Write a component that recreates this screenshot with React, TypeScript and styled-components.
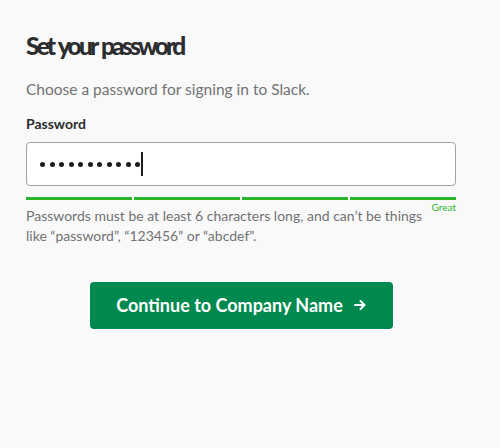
import React from "react";
import styled, { createGlobalStyle } from "styled-components";

const GlobalStyle = createGlobalStyle`
  html, body {
    margin: 0;
    padding: 0;
    background: #f9f9f9;
  }
  body {
    font-family: Lato, "Open Sans", sans-serif;
    -webkit-font-smoothing: antialiased;
  }
`;

const Page = styled.main`
  width: 500px;
  min-height: 448px;
  box-sizing: border-box;
  padding: 30px 44px 0 26px;
  background: #f9f9f9;
`;

const Form = styled.form`
  width: 430px;
  display: flex;
  flex-direction: column;
`;

const Title = styled.h1`
  margin: 0;
  font-size: 24.5px;
  line-height: 31px;
  font-weight: 900;
  color: #2c2d30;
  letter-spacing: -2.8px;
  word-spacing: 2px;
`;

const Lead = styled.p`
  margin: 18px 0 0;
  font-size: 15.5px;
  line-height: 20px;
  color: #717274;
`;

const Label = styled.label`
  margin-top: 16px;
  font-size: 14px;
  line-height: 18px;
  font-weight: 700;
  color: #2c2d30;
`;

const Field = styled.div`
  margin-top: 9px;
  height: 44px;
  box-sizing: border-box;
  border: 1px solid #a0a0a2;
  border-radius: 4px;
  background: #ffffff;
  display: flex;
  align-items: center;
  padding: 0 0 0 13px;
`;

const Dots = styled.span`
  display: flex;
  gap: 4.5px;
`;

const Dot = styled.span`
  width: 5px;
  height: 5px;
  border-radius: 50%;
  background: #1d1c1d;
`;

const Caret = styled.span`
  width: 1.5px;
  height: 24px;
  margin-left: 1px;
  background: #1d1c1d;
`;

const Meter = styled.div`
  margin-top: 11px;
  display: grid;
  grid-template-columns: repeat(4, 1fr);
  gap: 2px;
`;

const Segment = styled.span<{ $on: boolean }>`
  height: 3px;
  background: ${(p) => (p.$on ? "#2bb52a" : "#d8d8d8")};
`;

const Strength = styled.div`
  margin-top: 1px;
  display: flex;
  justify-content: flex-end;
  font-size: 10px;
  line-height: 12px;
  color: #2bb52a;
`;

const Hint = styled.p`
  margin: -7px 0 0;
  width: 412px;
  font-size: 14px;
  line-height: 20px;
  color: #717274;
`;

const Actions = styled.div`
  margin-top: 36px;
  display: flex;
  justify-content: center;
`;

const Button = styled.button`
  width: 303px;
  height: 47px;
  border: none;
  border-radius: 4px;
  background: #00894f;
  color: #ffffff;
  font-family: Lato, "Open Sans", sans-serif;
  font-size: 18px;
  font-weight: 700;
  display: flex;
  align-items: center;
  justify-content: center;
  gap: 11px;
  padding: 0 0 2px;
  cursor: pointer;
`;

const Arrow = () => (
  <svg width="12" height="10" viewBox="0 0 12 10" fill="none" aria-hidden="true">
    <path
      d="M1 5h9.5M6.5 1l4 4-4 4"
      stroke="#ffffff"
      strokeWidth="2"
      strokeLinecap="round"
      strokeLinejoin="round"
    />
  </svg>
);

export default function App() {
  const length = 11;
  return (
    <>
      <GlobalStyle />
      <Page>
        <Form onSubmit={(e) => e.preventDefault()}>
          <Title>Set your password</Title>
          <Lead>Choose a password for signing in to Slack.</Lead>
          <Label>Password</Label>
          <Field role="textbox" aria-label="Password">
            <Dots>
              {Array.from({ length }).map((_, i) => (
                <Dot key={i} />
              ))}
            </Dots>
            <Caret />
          </Field>
          <Meter>
            {[0, 1, 2, 3].map((i) => (
              <Segment key={i} $on />
            ))}
          </Meter>
          <Strength>Great</Strength>
          <Hint>
            Passwords must be at least 6 characters long, and can’t be things
            like “password”, “123456” or “abcdef”.
          </Hint>
          <Actions>
            <Button type="submit">
              Continue to Company Name
              <Arrow />
            </Button>
          </Actions>
        </Form>
      </Page>
    </>
  );
}
